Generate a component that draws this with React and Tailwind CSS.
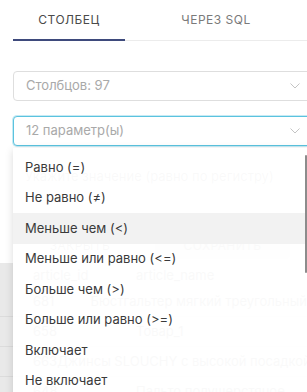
import React from "react";

const options = [
  "Равно (=)",
  "Не равно (≠)",
  "Меньше чем (<)",
  "Меньше или равно (<=)",
  "Больше чем (>)",
  "Больше или равно (>=)",
  "Включает",
  "Не включает",
];

const rows = [
  ["681", "Бюстгальтер мягкий треугольный"],
  ["658", "Товар_1"],
  ["663", "Джинсы SLOUCHY с высокой посадкой"],
  ["648", "Пальто полушерстяное"],
];

function Chevron() {
  return (
    <svg width="10" height="6" viewBox="0 0 10 6" fill="none" className="shrink-0">
      <path d="M0.5 0.5L5 5L9.5 0.5" stroke="#c4c4c4" strokeWidth="1" />
    </svg>
  );
}

function Select({ label, focused }) {
  return (
    <div
      className={
        focused
          ? "ml-[13px] w-[300px] h-[30px] flex items-center justify-between pl-[12px] pr-[12px] rounded-[4px] border border-[#5bc3df] shadow-[0_0_0_1px_rgba(91,195,223,0.35)] bg-white"
          : "ml-[13px] w-[300px] h-[30px] flex items-center justify-between pl-[12px] pr-[12px] rounded-[4px] border border-[#dedede] bg-white"
      }
    >
      <span className="text-[13px] text-[#a9a9a9]">{label}</span>
      <Chevron />
    </div>
  );
}

export default function App() {
  return (
    <div
      className="relative w-[307px] h-[392px] overflow-hidden bg-white"
      style={{ fontFamily: "Inter, 'Noto Sans', sans-serif" }}
    >
      {/* tabs */}
      <div className="flex items-end pl-[13px]">
        <div className="w-[118px] h-[41px] flex items-center justify-center border-b-2 border-[#3e4a7c] text-[12px] tracking-[0.5px] text-[#4a4a4a]">
          СТОЛБЕЦ
        </div>
        <div className="w-[182px] shrink-0 h-[41px] flex items-center justify-center border-b border-[#ececec] text-[12px] tracking-[0.5px] text-[#7a7a7a]">
          ЧЕРЕЗ SQL
        </div>
      </div>

      <div className="mt-[30px]">
        <Select label="Столбцов: 97" />
      </div>
      <div className="mt-[15px]">
        <Select label="12 параметр(ы)" focused />
      </div>

      {/* content behind the open list */}
      <div className="mt-[22px] pl-[25px] text-[13px] leading-[16px] text-[#555] whitespace-nowrap">
        Укажите значение (равно по регистру)
      </div>
      <div className="mt-[48px] flex items-center pl-[25px] h-[28px] whitespace-nowrap">
        <div className="w-[110px] text-center text-[12px] tracking-[0.4px] text-[#555]">ЗАКРЫТЬ</div>
        <div className="ml-[20px] w-[135px] h-[26px] flex items-center justify-center rounded-[4px] bg-[#c8c8c8] text-[12px] tracking-[0.4px] text-[#555]">
          СОХРАНИТЬ
        </div>
      </div>
      <div className="mt-[3px] bg-[#e9e9e9] h-[200px] text-[13px] text-[#444] whitespace-nowrap">
        <div className="flex items-center h-[24px] pt-[2px]">
          <div className="w-[136px] pl-[33px]">article_id</div>
          <div>article_name</div>
        </div>
        {rows.map(([id, name]) => (
          <div key={id} className="flex items-center h-[30px] border-b border-[#dcdcdc]">
            <div className="w-[136px] pl-[33px]">{id}</div>
            <div>{name}</div>
          </div>
        ))}
      </div>

      {/* open list */}
      <div className="absolute top-[148px] left-[13px] w-[296px] h-[260px] py-[4px] bg-white/[0.97] shadow-[0_2px_8px_rgba(0,0,0,0.15)]">
        {options.map((o, i) => (
          <div
            key={o}
            className={
              i === 2
                ? "h-[30.5px] flex items-center px-[12px] text-[13px] text-[#3a3a3a] bg-[#f2f2f2]"
                : "h-[30.5px] flex items-center px-[12px] text-[13px] text-[#3a3a3a]"
            }
          >
            {o}
          </div>
        ))}
        <div className="absolute left-[292px] top-[7px] w-[2px] h-[118px] rounded bg-[#8c8c8c]" />
      </div>
    </div>
  );
}
